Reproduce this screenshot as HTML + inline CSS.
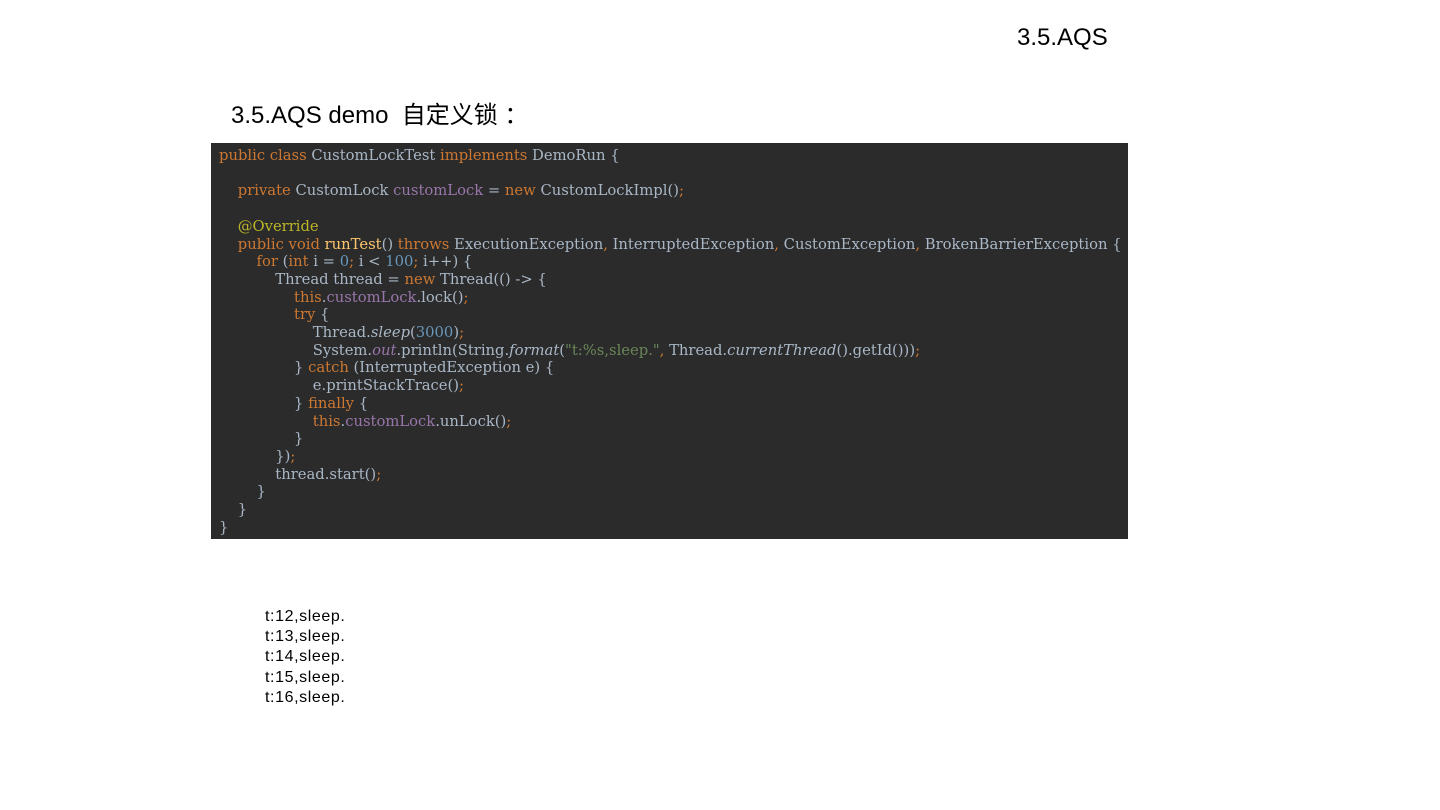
<!DOCTYPE html>
<html><head><meta charset="utf-8"><style>
body{margin:0;width:1440px;height:810px;background:#fff;position:relative;overflow:hidden;font-family:"Liberation Sans","Noto Sans CJK SC",sans-serif}
.t1{position:absolute;left:1017px;top:24px;font-size:24px;color:#000}
.t2{position:absolute;left:231px;top:95px;font-size:24px;color:#000}
.code{position:absolute;left:211px;top:143px;width:917px;height:396px;background:#2b2b2b;box-sizing:border-box;padding:4px 0 0 8px;font-family:"DejaVu Serif",serif;font-size:14.75px;line-height:17.71px;color:#a9b7c6;white-space:pre;overflow:hidden}
.k{color:#cc7832}.p{color:#9876aa}.a{color:#bbb529}.m{color:#ffc66d}.n{color:#6897bb}.s{color:#6a8759}i{font-style:italic}
.out{position:absolute;left:265px;top:607px;font-size:16px;letter-spacing:0.6px;line-height:20.2px;color:#000}
</style></head><body>
<div class="t1">3.5.AQS</div>
<div class="t2">3.5.AQS demo&nbsp; 自定义锁 ：</div>
<div class="code"><span class="k">public class </span>CustomLockTest <span class="k">implements </span>DemoRun {

    <span class="k">private </span>CustomLock <span class="p">customLock </span>= <span class="k">new </span>CustomLockImpl()<span class="k">;</span>

    <span class="a">@Override</span>
    <span class="k">public void </span><span class="m">runTest</span>() <span class="k">throws </span>ExecutionException<span class="k">, </span>InterruptedException<span class="k">, </span>CustomException<span class="k">, </span>BrokenBarrierException {
        <span class="k">for </span>(<span class="k">int </span>i = <span class="n">0</span><span class="k">; </span>i &lt; <span class="n">100</span><span class="k">; </span>i++) {
            Thread thread = <span class="k">new </span>Thread(() -&gt; {
                <span class="k">this</span>.<span class="p">customLock</span>.lock()<span class="k">;</span>
                <span class="k">try </span>{
                    Thread.<i>sleep</i>(<span class="n">3000</span>)<span class="k">;</span>
                    System.<i class="p">out</i>.println(String.<i>format</i>(<span class="s">"t:%s,sleep."</span><span class="k">, </span>Thread.<i>currentThread</i>().getId()))<span class="k">;</span>
                } <span class="k">catch </span>(InterruptedException e) {
                    e.printStackTrace()<span class="k">;</span>
                } <span class="k">finally </span>{
                    <span class="k">this</span>.<span class="p">customLock</span>.unLock()<span class="k">;</span>
                }
            })<span class="k">;</span>
            thread.start()<span class="k">;</span>
        }
    }
}</div>
<div class="out">t:12,sleep.<br>t:13,sleep.<br>t:14,sleep.<br>t:15,sleep.<br>t:16,sleep.</div>
</body></html>
